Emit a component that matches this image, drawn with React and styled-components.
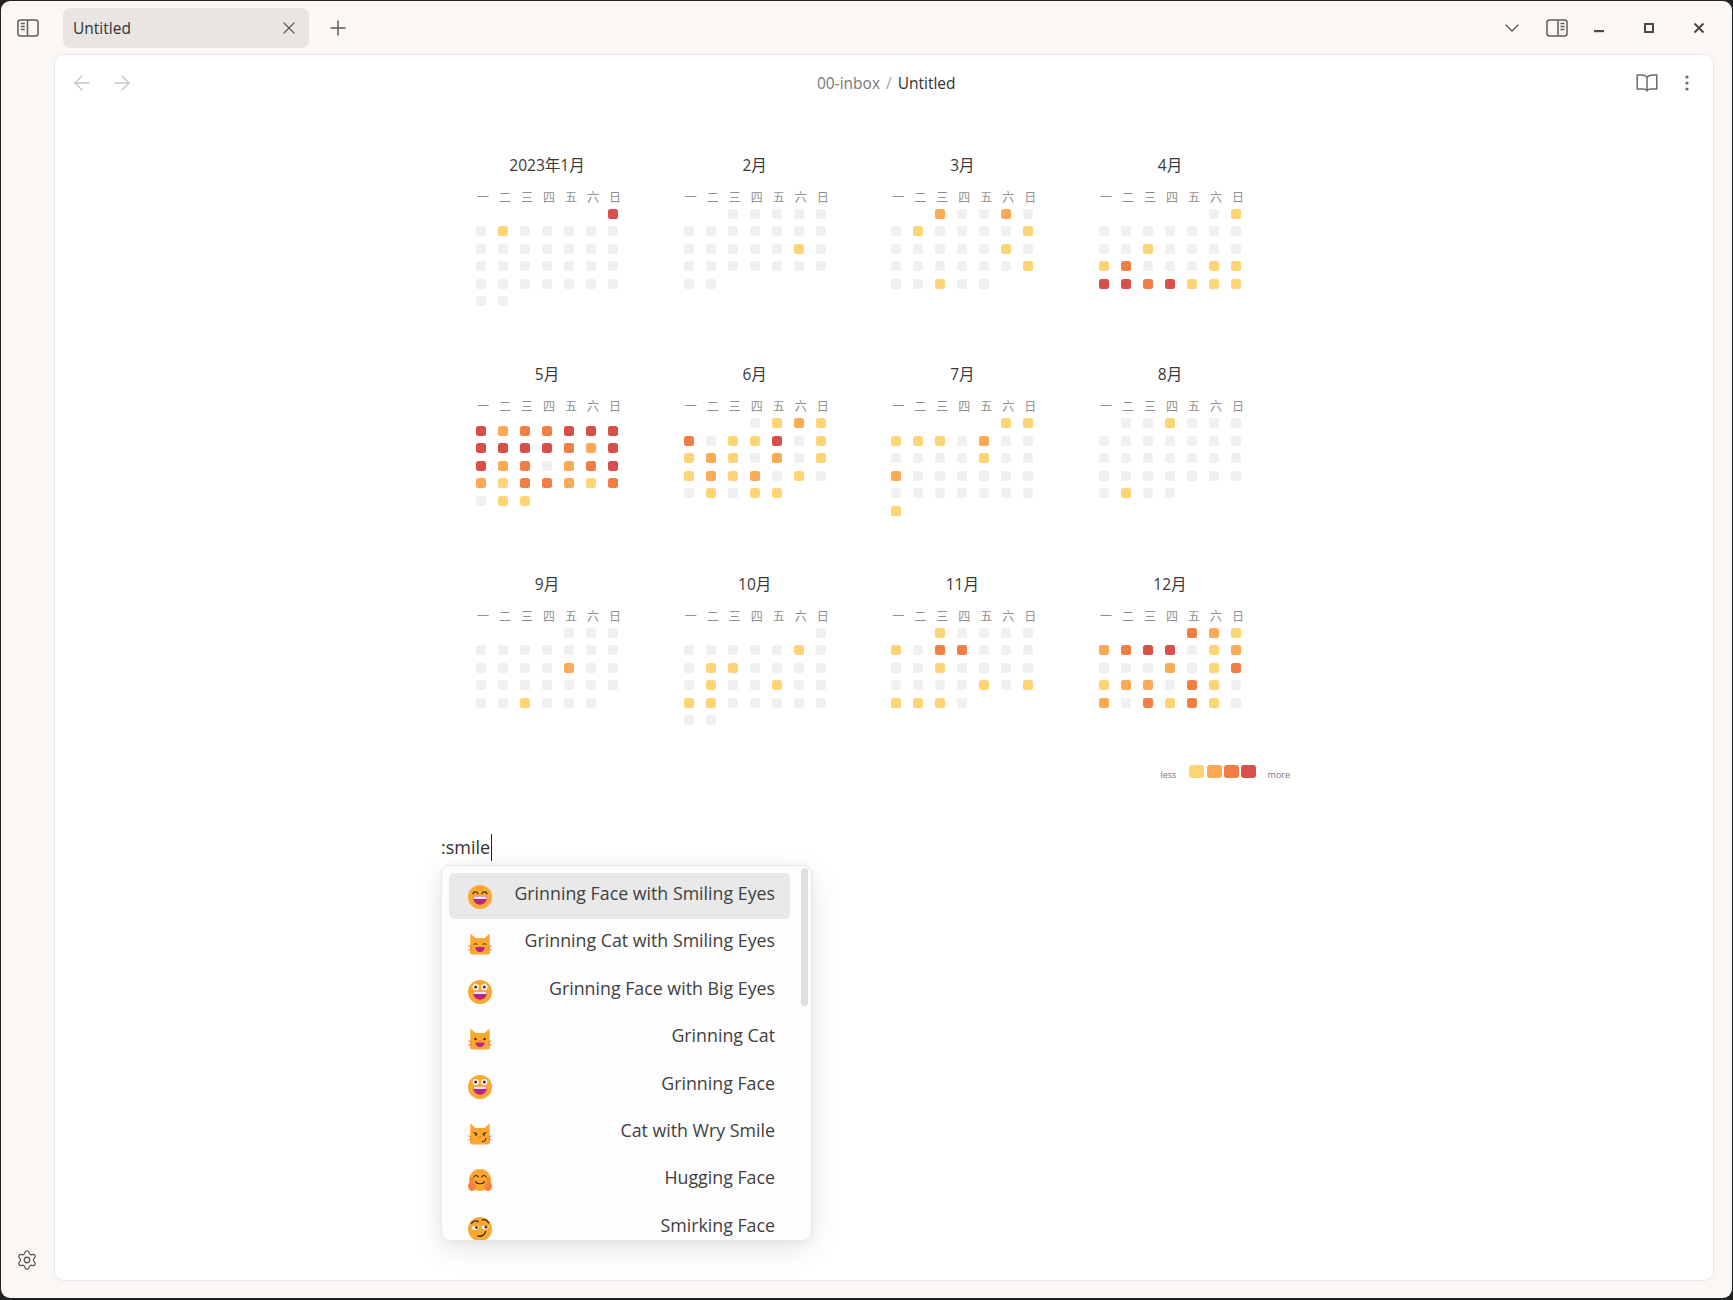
import React from 'react';
import styled, { createGlobalStyle } from 'styled-components';
import { X, Plus, ArrowLeft, ArrowRight, ChevronDown, Settings } from 'lucide-react';

const Global = createGlobalStyle`
  html, body { margin: 0; padding: 0; background: #222; }
  * { box-sizing: border-box; }
  body { font-family: "Open Sans", "Noto Sans CJK SC", sans-serif; }
`;

const Frame = styled.div`
  width: 1733px; height: 1300px; background: #222; padding: 1px 1px 2px 1px;
`;
const Win = styled.div`
  width: 100%; height: 100%; background: #faf7f4; border-radius: 9px; display: flex; flex-direction: column; overflow: hidden;
`;
const TitleBar = styled.div`
  height: 53px; flex: none; display: flex; align-items: flex-start; padding-top: 7px; position: relative;
`;
const IconSlot = styled.div`
  width: ${p => p.$w || 24}px; height: 40px; flex: none; display: flex; align-items: center; justify-content: center;
  color: ${p => p.$c || '#5c5c5c'}; margin-left: ${p => p.$ml || 0}px; padding-top: ${p => p.$pt || 0}px;
`;
const Tab = styled.div`
  width: 246px; height: 40px; margin-left: 23.500px; background: #e8e5e2; border-radius: 8px; display: flex; align-items: center;
  justify-content: space-between; padding: 0 10px; font-size: 15.500px; color: #333;
`;
const TabClose = styled.span`display: flex; color: #5c5c5c; margin-right: 0.500px;`;
const Spacer = styled.div`flex: 1;`;
const Body = styled.div`flex: 1; display: flex; min-height: 0;`;
const Rail = styled.div`
  width: 52.500px; flex: none; display: flex; flex-direction: column; justify-content: flex-end; align-items: center; padding: 0 0 27px 0; color: #5c5c5c;
`;
const Card = styled.div`
  flex: 1; margin: 0 18px 17px 0; background: #fff; border: 1px solid #e9e5f0; border-radius: 10px; display: flex; flex-direction: column; min-width: 0; overflow: hidden;
`;
const ViewHeader = styled.div`
  height: 56px; flex: none; display: flex; align-items: center; position: relative;
`;
const NavBtn = styled.div`
  width: 24px; display: flex; justify-content: center; color: #c6c6c6; margin-left: ${p => p.$ml}px;
`;
const Crumbs = styled.div`
  position: absolute; left: 5px; right: 0; top: 0; height: 56px; display: flex; align-items: center; justify-content: center; font-size: 15.500px; color: #333;
`;
const CrumbParent = styled.span`color: #777;`;
const CrumbSep = styled.span`color: #a8a8a8; margin: 0 6px;`;
const Actions = styled.div`
  margin-left: auto; display: flex; align-items: center; color: #6a6a6a; padding-right: 24px; gap: 27px; position: relative;
`;
const Content = styled.div`
  flex: 1; position: relative; padding: 41.750px 0 0 421.500px;
`;
const CalendarGrid = styled.div`
  display: grid; grid-template-columns: repeat(4, 207.670px); grid-auto-rows: 209.500px;
`;
const Month = styled.div`width: 142px;`;
const MonthTitle = styled.div`
  height: 25px; line-height: 25px; font-size: 15.500px; text-align: center; color: #383838; white-space: nowrap;
`;
const Labels = styled.div`
  display: grid; grid-template-columns: repeat(7, 22px); width: 154px; margin-top: 11px; height: 16px; line-height: 16px; font-size: 12px; color: #8f8f8f; font-family: "Noto Sans CJK SC", sans-serif;
`;
const Label = styled.span`padding-left: 1px;`;
const Cells = styled.div`
  display: grid; grid-template-columns: repeat(7, 10px); column-gap: 12px; grid-auto-rows: 10px; row-gap: 7.500px; margin-top: ${p => 3.75 + (p.$shift || 0)}px;
`;
const COLORS = ['#eff0f2', '#ffd475', '#fcaa54', '#f37e44', '#d94f4a'];
const Cell = styled.div`
  width: 10px; height: 10px; border-radius: 2.500px; background: ${p => p.$blank ? 'transparent' : COLORS[p.$v]};
`;
const Legend = styled.div`
  position: absolute; left: 1106px; top: 654px; display: flex; align-items: center; font-size: 9px; color: #777; height: 13px;
`;
const LegendText = styled.span`margin: ${p => p.$m}; padding-top: 7px; line-height: 10px;`;
const LegendSwatch = styled.div`width: 15px; height: 13px; border-radius: 3px; margin-right: 2.300px; background: ${p => COLORS[p.$v]};`;
const EditorLine = styled.div`
  position: absolute; left: 386.500px; top: 721px; font-size: 18px; line-height: 30px; color: #333; display: flex; align-items: center; height: 30px;
`;
const Caret = styled.span`
  display: block; width: 1px; height: 27px; background: #222; margin-left: 0.500px;
`;
const Popup = styled.div`
  position: absolute; left: 386px; top: 754px; width: 371px; height: 376px; background: #fdfdfd; border: 1px solid #e9e5f0; border-radius: 9px;
  box-shadow: 0 8px 30px rgba(0,0,0,0.10), 0 2px 8px rgba(0,0,0,0.04); overflow: hidden; padding: 7px 0 0 7.500px;
`;
const Item = styled.div`
  width: 341px; height: 46px; margin-bottom: 1.400px; border-radius: 5px; background: ${p => p.$sel ? '#e9e9e9' : 'transparent'};
  display: flex; align-items: flex-start; justify-content: space-between; padding: 0 15px 0 19px; font-size: 17.800px; color: #404040; flex: none;
`;
const ItemText = styled.span`line-height: 40px; white-space: nowrap;`;
const EmojiBox = styled.div`width: 24px; height: 24px; margin-top: 12px; flex: none;`;
const Thumb = styled.div`
  position: absolute; left: 359.500px; top: 2px; width: 7px; height: 138px; border-radius: 4px; background: #dfdfdf;
`;

const FACE = '#fca82e';
const Mouth = () => <><path d="M5 11.500h14c0 5-3 8.200-7 8.200s-7-3.200-7-8.200z" fill="#b8248c" /><path d="M5.300 11.500h13.400l-.4 2.400H5.700z" fill="#f2e4ec" /></>;
const BigEyes = () => <><circle cx="7.700" cy="7" r="3.100" fill="#fff" /><circle cx="16.300" cy="7" r="3.100" fill="#fff" /><circle cx="7.700" cy="7" r="1.500" fill="#3b2a32" /><circle cx="16.300" cy="7" r="1.500" fill="#3b2a32" /></>;
const ArcEyes = () => <g fill="none" stroke="#3b2a32" strokeWidth="1.300" strokeLinecap="round"><path d="M5 8.600c.6-2.400 4.200-2.400 5 0" /><path d="M14 8.600c.8-2.400 4.400-2.400 5 0" /></g>;
const CatBody = ({ children }) => (
  <svg width="24" height="24" viewBox="0 0 24 24">
    <path d="M2.400 1.500l5 4.500h9.200l5-4.500.4 19a2 2 0 0 1-2 2H4a2 2 0 0 1-2-2z" fill={FACE} />
    <g stroke="#f0743c" strokeWidth="1" strokeLinecap="round"><path d="M.8 14l2.600 1M.8 18l2.600-1M23.200 14l-2.600 1M23.200 18l-2.600-1" /></g>
    {children}
  </svg>
);
const Circle = ({ children }) => (
  <svg width="24" height="24" viewBox="0 0 24 24"><circle cx="12" cy="12" r="12" fill={FACE} />{children}</svg>
);
const EMOJI = {
  grinSmile: <Circle><ArcEyes /><Mouth /></Circle>,
  grinBig: <Circle><BigEyes /><Mouth /></Circle>,
  grin: <Circle><BigEyes /><Mouth /></Circle>,
  catSmile: <CatBody><g fill="none" stroke="#3b2a32" strokeWidth="1" strokeLinecap="round"><path d="M6 12.500c.6-1.400 2.400-1.400 3 0M15 12.500c.6-1.400 2.400-1.400 3 0" /></g><path d="M7.500 15h9c0 3.500-2 5-4.500 5s-4.500-1.500-4.500-5z" fill="#b8248c" /></CatBody>,
  cat: <CatBody><circle cx="7.500" cy="12" r="1.200" fill="#3b2a32" /><circle cx="16.500" cy="12" r="1.200" fill="#3b2a32" /><path d="M11 13h2l-1 1z" fill="#e0309a" /><path d="M7.500 15.500h9c0 3.200-2 4.500-4.500 4.500s-4.500-1.300-4.500-4.500z" fill="#b8248c" /></CatBody>,
  catWry: <CatBody><g fill="none" stroke="#3b2a32" strokeWidth="1.100" strokeLinecap="round"><path d="M6 10.500l3 1.500M18 10.500l-3 1.500M14 19.500c2 .2 3.600-1 3.800-3" /></g><circle cx="8" cy="13" r=".9" fill="#3b2a32" /><circle cx="16" cy="13" r=".9" fill="#3b2a32" /><path d="M11 14.500h2l-1 1.200z" fill="#e0309a" /></CatBody>,
  hug: (
    <svg width="24" height="24" viewBox="0 0 24 24">
      <circle cx="12" cy="11" r="11" fill={FACE} />
      <circle cx="4" cy="10.500" r="2" fill="#f5803e" /><circle cx="20" cy="10.500" r="2" fill="#f5803e" />
      <g fill="none" stroke="#3b2a32" strokeWidth="1.200" strokeLinecap="round"><path d="M6 8c.8-2 3.400-2 4.200 0M13.800 8c.8-2 3.400-2 4.200 0M7.500 12.500c1.500 3 7.500 3 9 0" /></g>
      <path d="M0 17c0-2.500 2-5 3.500-4.500S7 15 7.500 17c.5 2.500-1.500 5-3.500 5S0 20 0 17zM24 17c0-2.500-2-5-3.500-4.500S17 15 16.500 17c-.5 2.500 1.500 5 3.500 5s4-2 4-5z" fill="#f5803e" />
    </svg>
  ),
  smirk: <Circle><g fill="none" stroke="#3b2a32" strokeWidth="1" strokeLinecap="round"><path d="M3.500 6.500C5 4 8 3.600 10 4.500M14.500 2.800c2.500-.5 5 .8 6 3M10 19c3.500 1 7-1 7.500-4.500" strokeWidth="1.400" /></g><path d="M3.500 9.500h7.500c-.3 2.500-1.800 3.600-3.700 3.600S3.800 12 3.500 9.500zM13.500 9h7.200c-.3 2.400-1.700 3.500-3.600 3.500S13.800 11.400 13.500 9z" fill="#fff" /><circle cx="8.500" cy="10.600" r="1.400" fill="#3b2a32" /><circle cx="18" cy="10.200" r="1.400" fill="#3b2a32" /></Circle>,
};

const WEEK = ['一', '二', '三', '四', '五', '六', '日'];
const MONTHS = [
  { t: '2023年1月', r: ['......4', '0100000', '0000000', '0000000', '0000000', '00'] },
  { t: '2月', r: ['..00000', '0000000', '0000010', '0000000', '00'] },
  { t: '3月', r: ['..20020', '0100001', '0000010', '0000001', '00100'] },
  { t: '4月', r: ['.....01', '0000000', '0010000', '1300011', '4434111'] },
  { t: '5月', shift: 7.5, r: ['4233444', '4444324', '4230234', '2133213', '011'] },
  { t: '6月', r: ['...0121', '3011401', '1210201', '1212010', '01011'] },
  { t: '7月', r: ['.....11', '1110200', '0000100', '2000000', '0000000', '1'] },
  { t: '8月', r: ['.001000', '0000000', '0000000', '0000000', '0100'] },
  { t: '9月', r: ['....000', '0000000', '0000200', '0000000', '001000'] },
  { t: '10月', r: ['......0', '0000010', '0110000', '0100100', '1100000', '00'] },
  { t: '11月', r: ['..10000', '1033000', '0010000', '0000101', '1110'] },
  { t: '12月', r: ['....321', '2344012', '0002013', '1220310', '2031310'] },
];
const ITEMS = [
  ['grinSmile', 'Grinning Face with Smiling Eyes'],
  ['catSmile', 'Grinning Cat with Smiling Eyes'],
  ['grinBig', 'Grinning Face with Big Eyes'],
  ['cat', 'Grinning Cat'],
  ['grin', 'Grinning Face'],
  ['catWry', 'Cat with Wry Smile'],
  ['hug', 'Hugging Face'],
  ['smirk', 'Smirking Face'],
];

const LeftPane = () => (
  <svg width="22" height="18" viewBox="0 0 22 18" fill="none" stroke="currentColor" strokeWidth="1.500">
    <rect x="1" y="1" width="20" height="16" rx="2.500" />
    <path d="M10.500 1v16" />
    <path d="M3.800 4.500h4M3.800 7.500h4M3.800 10.500h4" strokeWidth="1.300" />
  </svg>
);
const RightPane = () => (
  <svg width="22" height="18" viewBox="0 0 22 18" fill="none" stroke="currentColor" strokeWidth="1.500">
    <rect x="1" y="1" width="20" height="16" rx="2.500" />
    <path d="M12 1v16" />
    <path d="M14.500 4.500h4M14.500 7.500h4M14.500 10.500h4" strokeWidth="1.300" />
  </svg>
);
const Book = () => (
  <svg width="22" height="20" viewBox="0 0 22 20" fill="none" stroke="currentColor" strokeWidth="1.500" strokeLinejoin="round">
    <path d="M11 4C9.500 2.500 7.500 2 5 2H1.200v14H7c2 0 3.200.6 4 1.600.8-1 2-1.600 4-1.600h5.800V2H17c-2.500 0-4.500.5-6 2zM11 4v14.500" />
  </svg>
);
const Dots = () => (
  <svg width="4" height="16" viewBox="0 0 4 16" fill="currentColor"><circle cx="2" cy="2" r="1.600" /><circle cx="2" cy="8" r="1.600" /><circle cx="2" cy="14" r="1.600" /></svg>
);
const MinBtn = () => <svg width="12" height="12" viewBox="0 0 12 12"><rect x="1" y="8" width="10" height="2.200" fill="#4a4a4a" /></svg>;
const MaxBtn = () => <svg width="12" height="12" viewBox="0 0 12 12"><rect x="2" y="2" width="8" height="8" fill="none" stroke="#4a4a4a" strokeWidth="2" /></svg>;
const CloseBtn = () => <svg width="12" height="12" viewBox="0 0 12 12"><path d="M1.500 1.500l9 9M10.500 1.500l-9 9" stroke="#4a4a4a" strokeWidth="2" /></svg>;

export default function App() {
  return (
    <Frame>
      <Global />
      <Win>
        <TitleBar>
          <IconSlot $w={24} $ml={14.5}><LeftPane /></IconSlot>
          <Tab>
            <span>Untitled</span>
            <TabClose><X size={20} strokeWidth={1.5} /></TabClose>
          </Tab>
          <IconSlot $w={24} $ml={17}><Plus size={24} strokeWidth={1.5} /></IconSlot>
          <Spacer />
          <IconSlot $w={24}><ChevronDown size={24} strokeWidth={1.4} /></IconSlot>
          <IconSlot $w={24} $ml={21}><RightPane /></IconSlot>
          <IconSlot $w={24} $ml={18}><MinBtn /></IconSlot>
          <IconSlot $w={24} $ml={26}><MaxBtn /></IconSlot>
          <IconSlot $w={24} $ml={26}><CloseBtn /></IconSlot>
          <IconSlot $w={21} />
        </TitleBar>
        <Body>
          <Rail><Settings size={22} strokeWidth={1.4} /></Rail>
          <Card>
            <ViewHeader>
              <NavBtn $ml={15.5}><ArrowLeft size={24} strokeWidth={1.4} /></NavBtn>
              <NavBtn $ml={15.5}><ArrowRight size={24} strokeWidth={1.4} /></NavBtn>
              <Crumbs><CrumbParent>00-inbox</CrumbParent><CrumbSep>/</CrumbSep><span>Untitled</span></Crumbs>
              <Actions><Book /><Dots /></Actions>
            </ViewHeader>
            <Content>
              <CalendarGrid>
                {MONTHS.map(m => (
                  <Month key={m.t}>
                    <MonthTitle>{m.t}</MonthTitle>
                    <Labels>{WEEK.map(w => <Label key={w}>{w}</Label>)}</Labels>
                    <Cells $shift={m.shift}>
                      {m.r.join('').split('').map((c, i) => <Cell key={i} $blank={c === '.'} $v={c === '.' ? 0 : Number(c)} />)}
                    </Cells>
                  </Month>
                ))}
              </CalendarGrid>
              <Legend>
                <LegendText $m="0 13px 0 0">less</LegendText>
                {[1, 2, 3, 4].map(v => <LegendSwatch key={v} $v={v} />)}
                <LegendText $m="0 0 0 9px">more</LegendText>
              </Legend>
              <EditorLine>:smile<Caret /></EditorLine>
              <Popup>
                {ITEMS.map(([k, t], i) => (
                  <Item key={k} $sel={i === 0}>
                    <EmojiBox>{EMOJI[k]}</EmojiBox>
                    <ItemText>{t}</ItemText>
                  </Item>
                ))}
                <Thumb />
              </Popup>
            </Content>
          </Card>
        </Body>
      </Win>
    </Frame>
  );
}
